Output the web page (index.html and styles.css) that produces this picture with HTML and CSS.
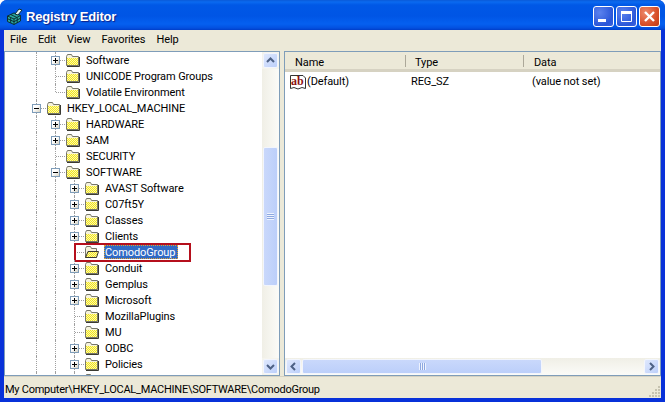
FILE: index.html
```html
<!DOCTYPE html>
<html lang="en">
<head>
    <meta charset="UTF-8">
    <title>Registry Editor</title>
    <link rel="stylesheet" href="styles.css">
</head>
<body>
    <svg class="defs" width="0" height="0">
        <defs>
            <pattern id="dither" width="2" height="2" patternUnits="userSpaceOnUse">
                <rect width="2" height="2" fill="#fdf9a8"/>
                <rect width="1" height="1" fill="#f2e520"/>
                <rect x="1" y="1" width="1" height="1" fill="#f2e520"/>
            </pattern>
        </defs>
        <symbol id="folder" viewBox="0 0 16 16">
            <path d="M1.5 4.5 L2.5 2.5 H6.5 L7.5 4.5 H13.5 V13.5 H1.5 Z" fill="#f6f3dc" stroke="#77776a"/>
            <rect x="2" y="6" width="11" height="7" fill="url(#dither)"/>
            <path d="M14.5 5 V14.5 H2" fill="none" stroke="#3a3a32"/>
        </symbol>
        <symbol id="folder-open" viewBox="0 0 16 16">
            <path d="M1.5 4.5 L2.5 2.5 H6.5 L7.5 4.5 H12.5 V13.5 H1.5 Z" fill="#f6f3dc" stroke="#77776a"/>
            <path d="M1.5 13.5 L4 7.5 H14.5 L12.5 13.5 Z" fill="url(#dither)" stroke="#3a3a32"/>
        </symbol>
    </svg>
    <div class="window">
        <div class="titlebar">
            <svg class="app-icon" width="17" height="17" viewBox="0 0 17 17">
                <path d="M1.5 8 L8 5 L14.5 7.5 V13 L8 16.5 L1.5 13.5 Z" fill="#2aa79f" stroke="#0b2f33"/>
                <path d="M1.5 8 L8 11 L14.5 7.5 M8 11 V16.5 M4.5 6.5 L11 9.5 M4.7 9.5 V15 M11.2 9.5 V15 M1.5 10.7 L8 13.7 L14.5 10.2" fill="none" stroke="#0b2f33"/>
                <path d="M9 6 L13 1 L16 2 L12 7 Z" fill="#e8f4f4" stroke="#0b2f33"/>
            </svg>
            <span class="title">Registry Editor</span>
            <div class="caption-buttons">
                <div class="cap-btn">
                    <svg width="21" height="21" viewBox="0 0 21 21"><rect x="5" y="13" width="8" height="3" fill="#fff"/></svg>
                </div>
                <div class="cap-btn">
                    <svg width="21" height="21" viewBox="0 0 21 21"><path d="M5.5 6.5 H15.5 V15.5 H5.5 Z" fill="none" stroke="#fff"/><rect x="5" y="5" width="11" height="3" fill="#fff"/></svg>
                </div>
                <div class="cap-btn close">
                    <svg width="21" height="21" viewBox="0 0 21 21"><path d="M6 6 L15 15 M15 6 L6 15" stroke="#fff" stroke-width="2.4"/></svg>
                </div>
            </div>
        </div>
        <div class="client">
            <div class="menubar">
                <span>File</span>
                <span>Edit</span>
                <span>View</span>
                <span>Favorites</span>
                <span>Help</span>
            </div>
            <div class="panes">
                <div class="pane tree-pane">
                    <div class="tree" id="tree"></div>
                    <div class="vscroll">
                        <div class="sb-btn">
                            <svg width="9" height="7" viewBox="0 0 9 7"><path d="M1 5 L4.5 1.5 L8 5" fill="none" stroke="#4d6185" stroke-width="2"/></svg>
                        </div>
                        <div class="sb-track">
                            <div class="sb-gap top"></div>
                            <div class="sb-thumb"><div class="grip"></div></div>
                            <div class="sb-gap"></div>
                        </div>
                        <div class="sb-btn">
                            <svg width="9" height="7" viewBox="0 0 9 7"><path d="M1 2 L4.5 5.5 L8 2" fill="none" stroke="#4d6185" stroke-width="2"/></svg>
                        </div>
                    </div>
                </div>
                <div class="pane list-pane">
                    <div class="list-head">
                        <div class="col col-name">Name</div>
                        <div class="col col-type">Type</div>
                        <div class="col col-data">Data</div>
                    </div>
                    <div class="list-body">
                        <div class="list-row">
                            <div class="val-name">
                                <svg class="ab-icon" width="16" height="16" viewBox="0 0 16 16">
                                    <path d="M0.5 1.5 H13 L15.5 4 V14.5 L12 13.5 L8 15 L4 13.5 L0.5 14.5 Z" fill="#fff" stroke="#333"/>
                                    <text x="1" y="10.5" class="ab-text">ab</text>
                                </svg>
                                <span>(Default)</span>
                            </div>
                            <div class="val-type">REG_SZ</div>
                            <div class="val-data">(value not set)</div>
                        </div>
                    </div>
                    <div class="hscroll">
                        <div class="sb-btn">
                            <svg width="7" height="9" viewBox="0 0 7 9"><path d="M5 1 L1.5 4.5 L5 8" fill="none" stroke="#4d6185" stroke-width="2"/></svg>
                        </div>
                        <div class="sb-thumb-h"><div class="grip-h"></div></div>
                        <div class="sb-track-h"></div>
                        <div class="sb-btn">
                            <svg width="7" height="9" viewBox="0 0 7 9"><path d="M2 1 L5.5 4.5 L2 8" fill="none" stroke="#4d6185" stroke-width="2"/></svg>
                        </div>
                    </div>
                </div>
            </div>
            <div class="statusbar">
                <span class="path">My Computer\HKEY_LOCAL_MACHINE\SOFTWARE\ComodoGroup</span>
                <svg class="resize-grip" width="13" height="13" viewBox="0 0 13 13">
                    <path d="M10 1h2v2h-2z M7 4h2v2H7z M10 4h2v2h-2z M4 7h2v2H4z M7 7h2v2H7z M10 7h2v2h-2z M1 10h2v2H1z M4 10h2v2H4z M7 10h2v2H7z M10 10h2v2h-2z" fill="#c6c3b0"/>
                </svg>
            </div>
        </div>
    </div>
    <script src="tree.js"></script>
</body>
</html>
```
FILE: styles.css
```css
html, body {
    margin: 0;
    padding: 0;
    background: #fff;
}
.defs {
    display: block;
    height: 0;
}
.window {
    width: 665px;
    height: 402px;
    display: flex;
    flex-direction: column;
    border-radius: 7px 7px 0 0;
    overflow: hidden;
    background: #0831d9;
    font-family: Roboto, sans-serif;
    font-size: 11px;
    letter-spacing: -0.1px;
    color: #000;
}
.titlebar {
    height: 30px;
    box-sizing: border-box;
    flex: none;
    display: flex;
    align-items: center;
    padding: 3px 5px 0 6px;
    background: linear-gradient(#0a5ad8 0, #0a6af0 2px, #0058e6 5px, #0055e5 16px, #0560f0 24px, #0350e0 28px, #003dc8 30px);
}
.app-icon {
    margin-right: 3px;
}
.title {
    font-family: "Liberation Sans", sans-serif;
    font-weight: bold;
    font-size: 13px;
    letter-spacing: -0.2px;
    color: #fff;
    text-shadow: 1px 1px 1px #0f1f85;
}
.caption-buttons {
    margin-left: auto;
    display: flex;
    gap: 2px;
}
.cap-btn {
    width: 21px;
    height: 21px;
    box-sizing: border-box;
    border: 1px solid #fff;
    border-radius: 3px;
    background: radial-gradient(circle at 30% 30%, #5b82ee, #2a56d8 70%, #3b62dd);
    display: flex;
    align-items: center;
    justify-content: center;
}
.cap-btn svg {
    flex: none;
}
.cap-btn.close {
    background: radial-gradient(circle at 30% 30%, #ee8a6c, #d8502a 60%, #c23a12);
}
.client {
    flex: 1;
    min-height: 0;
    margin: 0 4px 4px;
    display: flex;
    flex-direction: column;
    background: #ece9d8;
}
.menubar {
    height: 21px;
    flex: none;
    display: flex;
    align-items: center;
    padding: 0 0 3px 6px;
    box-sizing: border-box;
    gap: 11px;
}
.panes {
    height: 325px;
    flex: none;
    display: flex;
    gap: 4px;
}
.pane {
    box-sizing: border-box;
    border: 1px solid #7f9db9;
    background: #fff;
    display: flex;
    min-width: 0;
}
.tree-pane {
    width: 276px;
}
.list-pane {
    width: 377px;
    flex-direction: column;
}
.tree {
    flex: 1;
    overflow: hidden;
}
.tree-row {
    height: 16px;
    display: flex;
    align-items: center;
    padding-left: 22px;
    flex: none;
}
.guide {
    width: 19px;
    height: 16px;
    flex: none;
    position: relative;
}
.guide.on::before,
.guide.t::before,
.guide.l::before,
.guide.box::before {
    content: "";
    position: absolute;
    left: 9px;
    top: 0;
    bottom: 0;
    border-left: 1px dotted #a0a0a0;
}
.guide.l::before {
    bottom: 8px;
}
.guide.t::after,
.guide.l::after,
.guide.box::after {
    content: "";
    position: absolute;
    left: 10px;
    width: 9px;
    top: 8px;
    border-top: 1px dotted #a0a0a0;
}
.expander {
    position: absolute;
    left: 5px;
    top: 4px;
    width: 9px;
    height: 9px;
    box-sizing: border-box;
    border: 1px solid #7f9db9;
    background: linear-gradient(135deg, #fff 40%, #d6d2c2);
    z-index: 1;
}
.expander::before {
    content: "";
    position: absolute;
    left: 1px;
    top: 3px;
    width: 5px;
    height: 1px;
    background: #000;
}
.expander.plus::after {
    content: "";
    position: absolute;
    left: 3px;
    top: 1px;
    width: 1px;
    height: 5px;
    background: #000;
}
.folder-icon {
    width: 16px;
    height: 16px;
    flex: none;
}
.label {
    margin-left: 4px;
    padding: 0 1px;
    height: 14px;
    line-height: 16px;
    white-space: nowrap;
}
.tree-row.current {
    position: relative;
}
.tree-row.current .label {
    background: #316ac5;
    color: #fff;
    outline: 1px dotted #e0a030;
    outline-offset: -1px;
    padding-right: 3px;
}
.callout {
    position: absolute;
    left: 69px;
    top: -1px;
    width: 117px;
    height: 19px;
    box-sizing: border-box;
    border: 2px solid #b50f1c;
}
.vscroll {
    width: 17px;
    flex: none;
    display: flex;
    flex-direction: column;
    background: #f5f4ed;
    align-items: stretch;
}
.sb-btn {
    width: 15px;
    height: 15px;
    flex: none;
    box-sizing: border-box;
    margin: 1px;
    border: 1px solid #f2f5fd;
    border-radius: 2px;
    background: linear-gradient(135deg, #dfe8fd, #bccffa);
    display: flex;
    align-items: center;
    justify-content: center;
}
.sb-track {
    flex: 1;
    display: flex;
    flex-direction: column;
    background: linear-gradient(90deg, #f0efe6, #fbfbf8);
}
.sb-gap {
    flex: 1;
}
.sb-gap.top {
    flex: none;
    height: 78px;
}
.sb-thumb {
    height: 139px;
    flex: none;
    box-sizing: border-box;
    margin: 0 1px;
    border: 1px solid #f2f5fd;
    border-radius: 2px;
    background: linear-gradient(90deg, #c9d8fb, #bccffa);
    display: flex;
    align-items: center;
    justify-content: center;
}
.grip {
    width: 7px;
    height: 7px;
    background: repeating-linear-gradient(#eef3fe 0 1px, #8da8e0 1px 2px);
}
.list-head {
    height: 20px;
    flex: none;
    display: flex;
    background: #ece9d8;
    box-shadow: inset 0 -3px 0 #d6d2c2;
}
.col {
    box-sizing: border-box;
    padding-left: 9px;
    line-height: 21px;
}
.col-name {
    width: 121px;
    padding-left: 10px;
}
.col-type {
    width: 118px;
}
.col-data {
    flex: 1;
    padding-left: 10px;
}
.col-name,
.col-type {
    background: linear-gradient(#aca899, #aca899) right 3px / 1px 12px no-repeat;
}
.list-body {
    flex: 1;
    min-height: 0;
    padding-top: 1px;
}
.list-row {
    height: 17px;
    display: flex;
    align-items: center;
}
.val-name {
    width: 126px;
    flex: none;
    display: flex;
    align-items: center;
    padding-left: 5px;
    box-sizing: border-box;
    gap: 1px;
}
.val-type {
    width: 121px;
    flex: none;
}
.ab-icon {
    flex: none;
}
.ab-text {
    font-family: "Liberation Serif", serif;
    font-weight: bold;
    font-size: 12px;
    fill: #8c1010;
}
.hscroll {
    height: 17px;
    flex: none;
    display: flex;
    background: linear-gradient(#f0efe6, #fbfbf8);
}
.sb-thumb-h {
    width: 240px;
    flex: none;
    margin: 1px 0;
    box-sizing: border-box;
    border: 1px solid #f2f5fd;
    border-radius: 2px;
    background: linear-gradient(#c9d8fb, #bccffa);
    display: flex;
    align-items: center;
    justify-content: center;
}
.grip-h {
    width: 7px;
    height: 7px;
    background: repeating-linear-gradient(90deg, #eef3fe 0 1px, #8da8e0 1px 2px);
}
.sb-track-h {
    flex: 1;
}
.statusbar {
    flex: 1;
    min-height: 0;
    display: flex;
    align-items: center;
    padding: 3px 0 0 1px;
    border-top: 1px solid #d6d2c2;
}
.path {
    letter-spacing: -0.25px;
}
.resize-grip {
    margin-left: auto;
    align-self: flex-end;
}
```
FILE: tree.js
```js
// g = guide cells before the folder: on, t (tee), l (corner), box (+/-)
const rows = [
    { g: ['on', 'box+'], text: 'Software' },
    { g: ['on', 't'], text: 'UNICODE Program Groups' },
    { g: ['on', 'l'], text: 'Volatile Environment' },
    { g: ['box-'], text: 'HKEY_LOCAL_MACHINE' },
    { g: ['on', 'box+'], text: 'HARDWARE' },
    { g: ['on', 'box+'], text: 'SAM' },
    { g: ['on', 't'], text: 'SECURITY' },
    { g: ['on', 'box-'], text: 'SOFTWARE' },
    { g: ['on', 'on', 'box+'], text: 'AVAST Software' },
    { g: ['on', 'on', 'box+'], text: 'C07ft5Y' },
    { g: ['on', 'on', 'box+'], text: 'Classes' },
    { g: ['on', 'on', 'box+'], text: 'Clients' },
    { g: ['on', 'on', 't'], text: 'ComodoGroup', current: true },
    { g: ['on', 'on', 'box+'], text: 'Conduit' },
    { g: ['on', 'on', 'box+'], text: 'Gemplus' },
    { g: ['on', 'on', 'box+'], text: 'Microsoft' },
    { g: ['on', 'on', 't'], text: 'MozillaPlugins' },
    { g: ['on', 'on', 't'], text: 'MU' },
    { g: ['on', 'on', 'box+'], text: 'ODBC' },
    { g: ['on', 'on', 'box+'], text: 'Policies' },
    { g: ['on', 'on', 't'], text: '' }
];

const tree = document.getElementById('tree');
rows.forEach(r => {
    const row = document.createElement('div');
    row.className = 'tree-row' + (r.current ? ' current' : '');
    r.g.forEach(kind => {
        const cell = document.createElement('div');
        const isBox = kind.startsWith('box');
        cell.className = 'guide ' + (isBox ? 'box' : kind);
        if (isBox) {
            const btn = document.createElement('div');
            btn.className = 'expander' + (kind === 'box+' ? ' plus' : '');
            cell.appendChild(btn);
        }
        row.appendChild(cell);
    });
    row.insertAdjacentHTML('beforeend',
        '<svg class="folder-icon"><use href="#' + (r.current ? 'folder-open' : 'folder') + '"/></svg>');
    const label = document.createElement('span');
    label.className = 'label';
    label.textContent = r.text;
    row.appendChild(label);
    if (r.current) {
        const callout = document.createElement('div');
        callout.className = 'callout';
        row.appendChild(callout);
    }
    tree.appendChild(row);
});
```
